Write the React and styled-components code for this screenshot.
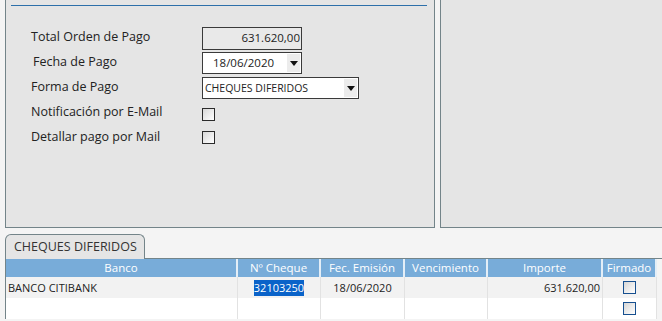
import React from "react";
import { styled, createGlobalStyle } from "styled-components";

const Global = createGlobalStyle`
  html, body {
    margin: 0;
    padding: 0;
    background: #f4f4f4;
    overflow: hidden;
  }
  body {
    font-family: "Open Sans", "DejaVu Sans", sans-serif;
    color: #222;
  }
`;

const Page = styled.div`
  width: 662px;
  height: 321px;
  overflow: hidden;
`;

const TopRow = styled.div`
  display: flex;
  height: 228px;
  padding-left: 5px;
  gap: 5px;
`;

const Panel = styled.div`
  box-sizing: border-box;
  background: #e5e5e5;
  border: 1px solid #738489;
  border-top: none;
  width: ${(p) => p.$width || "auto"};
  flex: ${(p) => (p.$grow ? 1 : "none")};
  margin-right: ${(p) => (p.$grow ? "-4px" : 0)};
`;

const Legend = styled.div`
  margin: 5px 7px 0 5px;
  border-top: 1px solid #2d70aa;
`;

const Form = styled.div`
  display: grid;
  grid-template-columns: 171px auto;
  row-gap: 3px;
  padding: 21px 0 0 25px;
`;

const Label = styled.div`
  font-size: 12.5px;
  height: 22px;
  line-height: 20px;
  padding-left: ${(p) => p.$indent || 0}px;
  white-space: nowrap;
`;

const Field = styled.div`
  display: flex;
  align-items: flex-start;
  height: 22px;
`;

const ReadBox = styled.div`
  box-sizing: border-box;
  width: 100px;
  height: 23px;
  border: 1px solid #3a3a3a;
  background: #e9e9e9;
  font-size: 11.5px;
  line-height: 20px;
  text-align: right;
  padding-right: 1px;
`;

const Select = styled.div`
  box-sizing: border-box;
  display: flex;
  align-items: stretch;
  width: ${(p) => p.$width}px;
  height: 22px;
  border: 1px solid #3a3a3a;
  background: #fff;
`;

const SelectText = styled.div`
  flex: 1;
  font-size: ${(p) => p.$size || 11}px;
  line-height: 20px;
  padding-left: ${(p) => p.$pad || 2}px;
  white-space: nowrap;
`;

const Arrow = styled.div`
  width: 13px;
  margin: 1px 1px 1px 0;
  background: #ececec;
  display: flex;
  align-items: center;
  justify-content: center;
`;

const Check = styled.div`
  box-sizing: border-box;
  width: 13px;
  height: 13px;
  border: 1px solid #2b2b2b;
  background: linear-gradient(135deg, #d8d8d8, #ffffff);
  margin-top: ${(p) => p.$top || 0}px;
`;

const Tabs = styled.div`
  margin: 6px 0 0 5px;
  display: flex;
  border-bottom: 1px solid #738489;
  height: 24px;
`;

const Tab = styled.div`
  box-sizing: border-box;
  width: 140px;
  height: 25px;
  border: 1px solid #738489;
  border-bottom: none;
  border-radius: 6px 6px 0 0;
  background: #e5e5e5;
  font-size: 12.5px;
  line-height: 24px;
  padding-left: 8px;
  color: #333;
`;

const Grid = styled.div`
  margin-left: 5px;
  border-left: 1px solid #738489;
  display: grid;
  grid-template-columns: 232px 83px 84px 83px 115px 54px;
`;

const Head = styled.div`
  background: #78acd9;
  color: #fff;
  font-size: 11.5px;
  height: 18px;
  line-height: 18px;
  text-align: center;
  border-right: 2px solid #e4eef7;
  &:last-child {
    border-right: none;
  }
`;

const Cell = styled.div`
  box-sizing: border-box;
  height: 21px;
  background: ${(p) => (p.$alt ? "#f2f2f2" : "#ffffff")};
  border-right: 1px solid #e2e2e2;
  font-size: 11px;
  line-height: 20px;
  padding: 0 2px;
  display: flex;
  align-items: center;
  justify-content: ${(p) =>
    p.$align === "right" ? "flex-end" : p.$align === "center" ? "center" : "flex-start"};
  white-space: nowrap;
`;

const Selected = styled.span`
  background: #0a63c9;
  color: #fff;
  line-height: 16px;
`;

const CellCheck = styled.div`
  box-sizing: border-box;
  width: 13px;
  height: 13px;
  border: 1px solid #164f8f;
  background: linear-gradient(135deg, #d6d6d6, #ffffff);
`;

const Caret = () => (
  <svg width="8" height="5" viewBox="0 0 8 5">
    <path d="M0 0h8L4 5z" fill="#111" />
  </svg>
);

export default function App() {
  const rows = [
    { banco: "BANCO CITIBANK", cheque: "32103250", fecha: "18/06/2020", venc: "", importe: "631.620,00" },
    { banco: "", cheque: "", fecha: "", venc: "", importe: "" },
  ];
  return (
    <Page>
      <Global />
      <TopRow>
        <Panel $width="430px">
          <Legend />
          <Form>
            <Label>Total Orden de Pago</Label>
            <Field>
              <ReadBox>631.620,00</ReadBox>
            </Field>
            <Label $indent={2}>Fecha de Pago</Label>
            <Field>
              <Select $width={100}>
                <SelectText $size={11.5} $pad={10}>18/06/2020</SelectText>
                <Arrow>
                  <Caret />
                </Arrow>
              </Select>
            </Field>
            <Label>Forma de Pago</Label>
            <Field>
              <Select $width={157}>
                <SelectText $size={10.5}>CHEQUES DIFERIDOS</SelectText>
                <Arrow>
                  <Caret />
                </Arrow>
              </Select>
            </Field>
            <Label>Notificación por E-Mail</Label>
            <Field>
              <Check $top={6} />
            </Field>
            <Label>Detallar pago por Mail</Label>
            <Field>
              <Check $top={4} />
            </Field>
          </Form>
        </Panel>
        <Panel $grow />
      </TopRow>
      <Tabs>
        <Tab>CHEQUES DIFERIDOS</Tab>
      </Tabs>
      <Grid>
        <Head>Banco</Head>
        <Head>Nº Cheque</Head>
        <Head>Fec. Emisión</Head>
        <Head>Vencimiento</Head>
        <Head>Importe</Head>
        <Head>Firmado</Head>
        {rows.map((r, i) => (
          <React.Fragment key={i}>
            <Cell $alt={i === 0}>{r.banco}</Cell>
            <Cell $alt={i === 0} $align="center">
              {r.cheque && <Selected>{r.cheque}</Selected>}
            </Cell>
            <Cell $alt={i === 0} $align="center">{r.fecha}</Cell>
            <Cell $alt={i === 0} $align="center">{r.venc}</Cell>
            <Cell $alt={i === 0} $align="right">{r.importe}</Cell>
            <Cell $alt={i === 0} $align="center">
              <CellCheck />
            </Cell>
          </React.Fragment>
        ))}
      </Grid>
    </Page>
  );
}
